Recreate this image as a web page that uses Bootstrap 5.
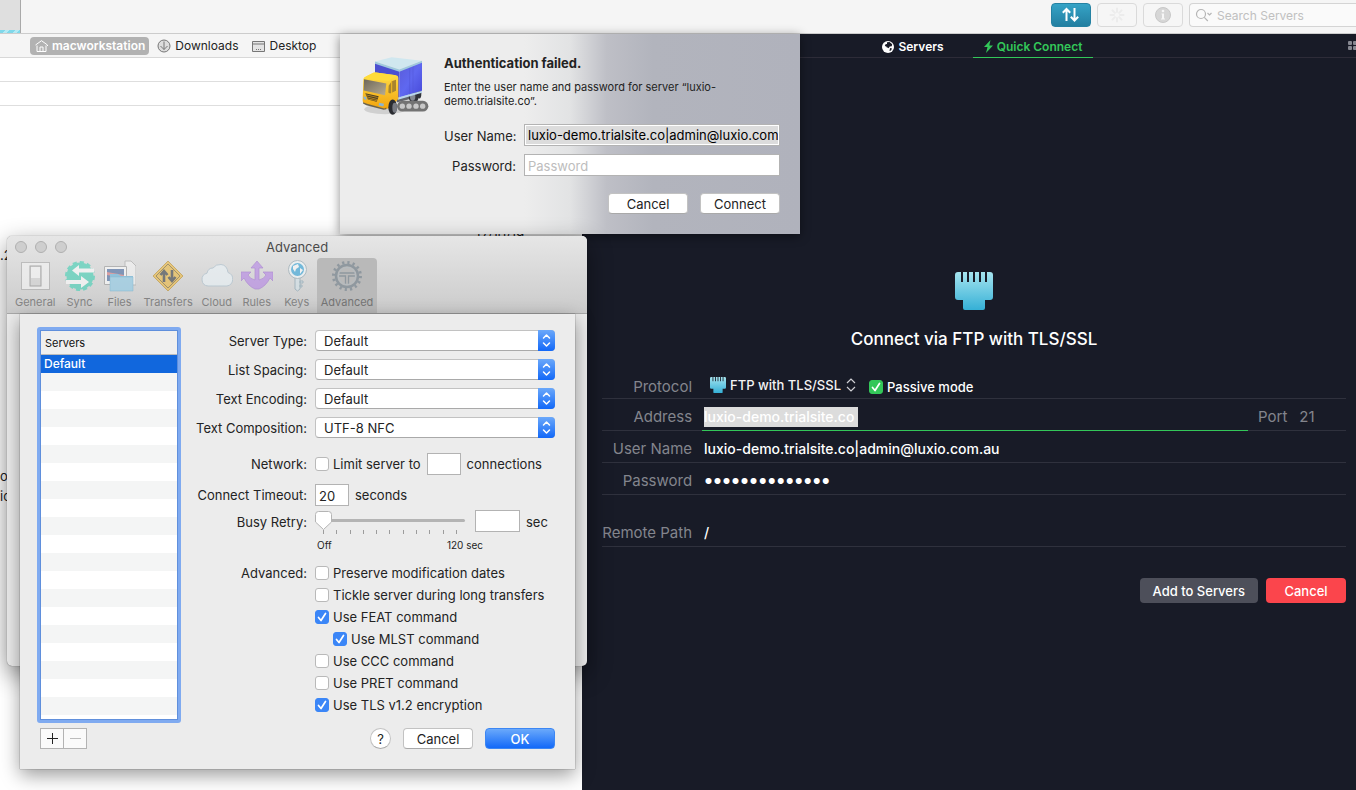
<!DOCTYPE html>
<html lang="en">
<head>
<meta charset="utf-8">
<meta name="viewport" content="width=device-width, initial-scale=1">
<title>Quick Connect</title>
<link href="https://cdn.jsdelivr.net/npm/bootstrap@5.3.0/dist/css/bootstrap.min.css" rel="stylesheet">
<style>
  body { font-family: Inter, "Liberation Sans", sans-serif; font-size: 13px; line-height: 16px; color: #232323; background: #fff; }
  svg { display: block; flex: none; }
  button { font: inherit; }
  input, select { font: inherit; color: inherit; min-width: 0; }
  input:focus, select:focus { outline: 0; }

  /* main toolbar */
  .topbar { height: 34px; background: #f5f5f5; border-bottom: 1px solid #ccc; }
  .tab-stub { width: 21px; background: #dfdfdf; border-right: 1px solid #a9a9a9; }
  .tab-stub::after { content: ""; display: block; height: 3px; margin-top: 30px; background: repeating-linear-gradient(135deg, #7fd8ea 0 4px, #b4eaf4 4px 7px); }
  .tool { width: 40px; height: 24px; border: 1px solid #dadada; border-radius: 4px; background: #f6f6f6; padding: 0; }
  .tool.on { background: linear-gradient(#35a3c6, #237fa1); border-color: #2582a3; }
  .finder { width: 167px; height: 24px; border: 1px solid #d4d4d4; border-right: 0; border-radius: 4px 0 0 4px; background: #fafafa; }
  .finder input { border: 0; background: none; padding: 2px 0 0; width: 120px; font-size: 12px; }
  .finder input::placeholder { color: #c0c0c0; opacity: 1; }

  /* local files */
  .local { width: calc(43% - 1px); background: #fff; overflow: hidden; }
  .places { height: 24px; padding: 1px 0 0 30px; background: #f5f5f5; border-bottom: 1px solid #d8d8d8; font-size: 12px; }
  .places a { color: #232323; text-decoration: none; height: 18px; border-radius: 4px; gap: 4px; }
  .places a.here { background: #b2b2b2; color: #fff; font-weight: 600; padding: 0 4px 0 5px; }
  .strip { height: 24px; border-bottom: 1px solid #dedede; }

  /* remote side */
  .remote { background: #181b27; color: #fff; overflow: hidden; }
  .tabs { height: 24px; padding-left: 8px; border-bottom: 1px solid #2d2c38; position: relative; font-size: 12px; }
  .tabs a { width: 120px; color: #fff; font-weight: 600; text-decoration: none; height: 24px; padding-top: 2px; gap: 4px; }
  .tabs a.on { color: #33c759; border-bottom: 1px solid #33c759; }
  .tabs .tiles { position: absolute; right: -1px; top: 7px; }
  .connect { padding: 214px 10px 0 20px; }
  .connect h1 { font-size: 17px; line-height: 24px; font-weight: 500; margin: 17px 0 20px; }
  .line { height: 32px; border-bottom: 1px solid #2f313d; font-size: 15px; line-height: 20px; }
  .line > label, .line .port { color: #83858d; }
  .line > label { width: 90px; text-align: right; padding-top: 4px; margin-right: 10px; flex: none; }
  .line .port { height: 32px; padding: 4px 0 0 10px; width: 98px; }
  .line .cell { height: 32px; padding: 4px 0 0 2px; font-size: 14px; }
  .line .cell.active { border-bottom: 1px solid #33c759; }
  .line input[type=text], .line input[type=password] { border: 0; background: none; color: #fff; padding: 0; font-weight: 500; height: 20px; width: 100%; }
  .line input[type=password] { font-size: 19px; font-weight: 700; }
  .line input[type=text].picked { background: #dcdcdc; width: 154px; }
  .line input[type=text].num { color: #83858d; width: 32px; font-weight: 400; }
  .line.proto { font-size: 13px; height: 28px; }
  .line.proto > label { font-size: 15px; }
  .line select { appearance: none; border: 0; background: none; color: #f4f4f4; padding: 0; width: 112px; font-weight: 500; }
  .line select option { color: #222; }
  .flat { border: 0; border-radius: 4px; height: 25px; color: #fff; font-weight: 500; padding: 0 13px; }

  /* tick boxes */
  .tick.form-check-input { width: 14px; height: 14px; margin: 0; border: 1px solid #b9b9b9; border-radius: 3px; background-color: #fff; flex: none; float: none; box-shadow: none; }
  .tick.form-check-input:checked { background-color: #3b86f7; border-color: #3b86f7; background-size: 14px; background-image: url("data:image/svg+xml,%3Csvg xmlns='http://www.w3.org/2000/svg' viewBox='0 0 14 14'%3E%3Cpath d='M3.500 7.500l2.500 3 4.500-7' fill='none' stroke='%23fff' stroke-width='1.700' stroke-linecap='round' stroke-linejoin='round'/%3E%3C/svg%3E"); }
  .tick.green.form-check-input:checked { background-color: #33c759; border-color: #33c759; }

  .push { height: 21px; border: 1px solid #c2c2c2; border-bottom-color: #a9a9a9; border-radius: 4px; background: #fff; line-height: 18px; padding: 0; color: #232323; }
  .push.main { background: linear-gradient(#6aa9fb, #1369f8); border-color: #3c86f3; color: #fff; font-weight: 500; }

  /* password sheet */
  .auth { position: absolute; left: 340px; top: 34px; width: 460px; padding: 21px 20px 20px; z-index: 3;
    background: linear-gradient(to right, #ededed 40%, #e2e3e4 50%, #bebfc6 58%, #b2b4bd 68%, #b0b2bc);
    box-shadow: 0 2px 10px rgba(0,0,0,.45); }
  .auth h2 { font-size: 13px; line-height: 16px; font-weight: 700; margin: 0 0 9px; }
  .auth p { font-size: 11px; line-height: 14px; margin: 0 0 16px; width: 300px; }
  .auth label { width: 72px; text-align: right; white-space: nowrap; padding-top: 2px; }
  .auth .push { width: 80px; }
  .box { height: 22px; border: 1px solid #b3b3b3; background: #fff; padding: 1px 3px 0; border-radius: 0; }
  .box.picked { padding: 1px 1px; background: linear-gradient(#dcdcdc, #dcdcdc) content-box, #fff; text-indent: 2px; color: #000; }
  .box::placeholder { color: #bdbdbd; opacity: 1; }

  /* preferences */
  .prefs { position: absolute; left: 7px; top: 236px; width: 580px; height: 430px; border-radius: 5px; background: #ececec; z-index: 4; box-shadow: 0 0 1px rgba(0,0,0,.6), 0 8px 24px rgba(0,0,0,.45); }
  .prefs header { height: 78px; border-radius: 5px 5px 0 0; background: linear-gradient(#e6e6e6, #cbcbcb); border-bottom: 1px solid #a8a8a8; }
  .caption { height: 22px; color: #4a4a4a; position: relative; }
  .lights { position: absolute; left: 8px; top: 5px; }
  .lights i { width: 12px; height: 12px; border-radius: 50%; background: #cecece; border: 1px solid #b0b0b0; }
  .panes { padding-left: 4px; }
  .panes button { border: 0; background: none; min-width: 40px; height: 55px; padding: 0 4px 3px; font-size: 11px; line-height: 14px; color: #858585; border-radius: 4px 4px 0 0; }
  .panes button.on { background: #b9b9b9; color: #757575; }
  .panes svg { opacity: .6; margin: 0 auto 3px; }
  .sheet { position: absolute; left: 13px; top: 78px; width: 555px; padding: 13px 20px 20px 17px; background: #ececec; box-shadow: 0 0 1px rgba(0,0,0,.6), 0 6px 18px rgba(0,0,0,.4); }
  .servers { width: 144px; height: 396px; border: 3px solid #7faaf0; border-radius: 3px; background: #fff; }
  .servers .inner { border: 1px solid #5f8fdc; height: 390px; background: repeating-linear-gradient(#fff 0 18px, #f4f5f5 18px 36px) 0 24px; }
  .servers table { width: 100%; border-collapse: separate; border-spacing: 0; }
  .servers th { font-size: 11px; font-weight: 400; height: 24px; line-height: 14px; padding: 0 4px; background: #efefef; border-bottom: 1px solid #bbb; color: #111; }
  .servers td { height: 18px; padding: 0 3px; background: #1167dd; color: #fff; line-height: 18px; font-weight: 500; font-size: 12px; }
  .pm { width: 24px; height: 21px; border: 1px solid #b3b3b3; background: #fafafa; padding: 0; }
  .pm + .pm { margin-left: -1px; }
  .cols > .lab { width: 126px; text-align: right; margin-right: 8px; flex: none; white-space: nowrap; }
  .pop { position: relative; width: 240px; height: 21px; }
  .pop select { appearance: none; width: 100%; height: 21px; border: 1px solid #c2c2c2; border-bottom-color: #a9a9a9; border-radius: 4px; background: #fff; padding: 0 8px; }
  .pop svg { position: absolute; right: 0; top: 0; pointer-events: none; }
  .slide { width: 150px; height: 20px; appearance: none; background: none; margin: 0; display: block; }
  .slide::-webkit-slider-runnable-track { height: 3px; background: #b4b4b4; border-radius: 2px; }
  .slide::-webkit-slider-thumb { appearance: none; width: 17px; height: 19px; margin-top: -8px; border: 0; background: url("data:image/svg+xml,%3Csvg xmlns='http://www.w3.org/2000/svg' viewBox='0 0 17 19'%3E%3Cpath d='M3.5.5h10a3 3 0 0 1 3 3v7.500l-8 7.500-8-7.500V3.500a3 3 0 0 1 3-3z' fill='%23fff' stroke='%23b4b4b4'/%3E%3C/svg%3E"); }
  .marks { padding: 0 8px; height: 4px; }
  .marks i { width: 1px; height: 4px; background: #9c9c9c; }
  .tiny { font-size: 10px; line-height: 14px; }
  .checks label { height: 22px; gap: 4px; }
  .help { width: 21px; height: 21px; border-radius: 50%; }
  .scraps { color: #222; line-height: 20px; }
</style>
</head>
<body class="vh-100 d-flex flex-column overflow-hidden position-relative">

<svg width="0" height="0" class="position-absolute" aria-hidden="true">
  <defs>
    <linearGradient id="gp" x1="0" y1="0" x2="0" y2="1"><stop offset="0" stop-color="#a5e4ef"/><stop offset="1" stop-color="#35b0d6"/></linearGradient>
    <linearGradient id="gb" x1="0" y1="0" x2="0" y2="1"><stop offset="0" stop-color="#6ba8fa"/><stop offset="1" stop-color="#1268f8"/></linearGradient>
    <symbol id="plug" viewBox="0 0 38 38"><path fill="url(#gp)" d="M3 0h3v10h2V0h4v10h2V0h4v10h2V0h4v10h2V0h4v10h2V0h3q3 0 3 3v22q0 3-3 3h-5v8q0 2-2 2H10q-2 0-2-2v-8H3q-3 0-3-3V3q0-3 3-3z"/></symbol>
    <symbol id="updown" viewBox="0 0 17 21"><path d="M0 0h13a4 4 0 0 1 4 4v13a4 4 0 0 1-4 4H0z" fill="url(#gb)"/><path d="M5.500 8l3-3 3 3M5.500 13l3 3 3-3" fill="none" stroke="#fff" stroke-width="1.500" stroke-linecap="round" stroke-linejoin="round"/></symbol>
  </defs>
</svg>

<div class="topbar d-flex">
  <div class="tab-stub"></div>
  <div class="d-flex ms-auto" style="gap:6px;padding-top:3px">
    <button class="tool on d-flex align-items-center justify-content-center" aria-label="Transfers"><svg width="18" height="16" viewBox="0 0 18 16" fill="none" stroke="#fff" stroke-width="2"><path d="M4.500 14V2M.8 5.800L4.500 2l3.700 3.800M12.500 1v12.500M8.800 9.700l3.700 3.800 3.700-3.800"/></svg></button>
    <button class="tool d-flex align-items-center justify-content-center" aria-label="Activity"><svg width="16" height="16" viewBox="0 0 16 16" stroke="#ececec" stroke-width="2" stroke-linecap="round"><path d="M8 1.500V5M8 11v3.500M1.500 8H5M11 8h3.500M3.400 3.400l2.500 2.500M10.100 10.100l2.500 2.500M3.400 12.600l2.500-2.500M10.100 5.900l2.500-2.500"/></svg></button>
    <button class="tool d-flex align-items-center justify-content-center" aria-label="Info"><svg width="16" height="16" viewBox="0 0 16 16"><circle cx="8" cy="8" r="7.500" fill="#d6d6d6" stroke="#c8c8c8"/><path d="M6.500 6.500H9v6H7v-5h-.5zM6 11.500h4v1H6z" fill="#f6f6f6"/><circle cx="8" cy="4" r="1.300" fill="#f6f6f6"/></svg></button>
    <div class="finder d-flex align-items-center ps-1">
      <svg width="23" height="14" viewBox="0 0 23 14" fill="none" stroke="#b5b5b5" stroke-width="1.200"><circle cx="7" cy="6" r="4.500"/><path d="M10.300 9.300l3.500 3.700M13.500 5l2 2 2-2"/></svg>
      <input type="search" placeholder="Search Servers" aria-label="Search Servers">
    </div>
  </div>
</div>

<div class="d-flex flex-fill">
  <section class="local">
    <nav class="places d-flex align-items-center">
      <a href="#" class="here d-flex align-items-center"><svg width="13" height="12" viewBox="0 0 13 12" fill="none" stroke="#fff"><path d="M.5 5L6.500.7 12.500 5v1M2 5.500v6h9v-6M5 11V7h3v4"/></svg>macworkstation</a>
      <a href="#" class="d-flex align-items-center ms-2"><svg width="14" height="14" viewBox="0 0 14 14" fill="none" stroke="#777"><circle cx="7" cy="7" r="6" fill="#ddd"/><path d="M7 2.500v8M3.500 7L7 10.500 10.500 7"/></svg>Downloads</a>
      <a href="#" class="d-flex align-items-center" style="margin-left:14px"><svg width="13" height="11" viewBox="0 0 13 11" fill="#e4e4e4" stroke="#777"><path d="M.5.500h12v10H.5zM.5 3h12"/><path d="M4 8.500h1M6 8.500h1M8 8.500h1"/></svg>Desktop</a>
    </nav>
    <div class="strip"></div>
    <div class="strip"></div>
    <div class="scraps position-relative">
      <div class="text-end" style="padding:119px 58px 0 0">17/10/19</div>
      <div>.2</div>
      <div style="padding-top:201px">o</div>
      <div>io</div>
    </div>
  </section>

  <main class="remote flex-fill">
    <nav class="tabs d-flex justify-content-center">
      <a href="#" class="d-flex align-items-center justify-content-center"><svg width="12" height="12" viewBox="0 0 12 12"><circle cx="6" cy="6" r="6" fill="#fff"/><path d="M5 1.200L7.500 1l2.700 2.200-.5 2-2 .3-1 1.800-1-.8-.7.300-.7-1.300-1.500-.5.700-1.800L5 3zM8 7l2 .5-1 2-1.500.5z" fill="#181b27"/></svg>Servers</a>
      <a href="#" class="on d-flex align-items-center justify-content-center"><svg width="9" height="13" viewBox="0 0 9 13"><path d="M6.500 0L0 7h3.500L2 13l7-7.500H5.300z" fill="#33c759"/></svg>Quick Connect</a>
      <svg class="tiles" width="9" height="9" viewBox="0 0 9 9" fill="#858790"><rect width="4" height="4" rx="1"/><rect x="5" width="4" height="4" rx="1"/><rect y="5" width="4" height="4" rx="1"/><rect x="5" y="5" width="4" height="4" rx="1"/></svg>
    </nav>

    <form class="connect" onsubmit="return false">
      <svg class="mx-auto" width="38" height="38"><use href="#plug"/></svg>
      <h1 class="text-center">Connect via FTP with TLS/SSL</h1>
      <div class="line proto d-flex align-items-center">
        <label for="proto">Protocol</label>
        <svg class="ms-2" width="16" height="16"><use href="#plug"/></svg>
        <select id="proto" class="ms-1"><option>FTP with TLS/SSL</option></select>
        <svg class="ms-1" width="10" height="14" viewBox="0 0 10 14" fill="none" stroke="#d0d0d4" stroke-width="1.200"><path d="M1 5l4-4 4 4M1 9l4 4 4-4"/></svg>
        <span class="d-flex align-items-center gap-1 fw-medium" style="margin-left:13px;padding-top:4px"><input class="tick green form-check-input" type="checkbox" id="passive" checked><label for="passive">Passive mode</label></span>
      </div>
      <div class="line d-flex">
        <label class="align-self-center" for="addr">Address</label>
        <div class="cell active flex-fill d-flex align-items-center"><input id="addr" class="picked" type="text" value="luxio-demo.trialsite.co"></div>
        <div class="port d-flex align-items-center"><label for="port" class="me-2 pe-1">Port</label><input class="num" id="port" type="text" value="21"></div>
      </div>
      <div class="line d-flex">
        <label class="align-self-center" for="user">User Name</label>
        <div class="cell flex-fill d-flex align-items-center"><input id="user" type="text" value="luxio-demo.trialsite.co|admin@luxio.com.au"></div>
      </div>
      <div class="line d-flex">
        <label class="align-self-center" for="pass">Password</label>
        <div class="cell flex-fill d-flex align-items-center"><input id="pass" type="password" value="abcdefghijklmn"></div>
      </div>
      <div class="line d-flex" style="margin-top:20px">
        <label class="align-self-center" for="path">Remote Path</label>
        <div class="cell flex-fill d-flex align-items-center"><input id="path" type="text" value="/"></div>
      </div>
      <div class="d-flex justify-content-end gap-2" style="margin-top:31px">
        <button class="flat" style="background:#4d4f5a">Add to Servers</button>
        <button class="flat" style="background:#fb454c;width:80px">Cancel</button>
      </div>
    </form>
  </main>
</div>

<form class="auth" onsubmit="return false">
  <div class="d-flex">
    <svg width="70" height="62" viewBox="60 76 210 185" style="margin-right:14px">
      <defs>
        <linearGradient id="tb" x1="0" y1="0" x2="1" y2="1"><stop offset="0" stop-color="#5a5bd8"/><stop offset=".5" stop-color="#5f68f0"/><stop offset="1" stop-color="#4648d8"/></linearGradient>
        <linearGradient id="ty" x1="0" y1="0" x2="0" y2="1"><stop offset="0" stop-color="#ffdf4a"/><stop offset="1" stop-color="#f2a30c"/></linearGradient>
        <linearGradient id="tw" x1="0" y1="0" x2="1" y2="1"><stop offset="0" stop-color="#6d6659"/><stop offset="1" stop-color="#b8ad92"/></linearGradient>
      </defs>
      <ellipse cx="135" cy="238" rx="62" ry="15" fill="#000" opacity=".12"/>
      <path d="M170 205l70-20v15l-70 18z" fill="#62656c"/>
      <ellipse cx="221" cy="200" rx="15" ry="20" fill="#303238"/><ellipse cx="218" cy="201" rx="8" ry="12" fill="#858992"/>
      <ellipse cx="238" cy="190" rx="6" ry="16" fill="#303238"/>
      <path d="M105 97l73 24v84l-73-40z" fill="#4b4fd0"/>
      <path d="M178 121l68-26v88l-68 20z" fill="url(#tb)"/>
      <path d="M209 110v84M219 106v84" stroke="#5055d4" stroke-width="1.500"/>
      <path d="M105 95l50-13 91 11-68 26z" fill="#d0e7ef"/><path d="M105 95l73 24v7l-73-24zM178 119l68-26v6l-68 27z" fill="#9fc8dc"/>
      <path d="M174 203l72-20v6l-72 21z" fill="#b9d5ec"/>
      <path d="M70 148q2-6 8-8l22-11q3-2 8-1l60 8q7 1 7 8v63l-12 14-15 14-14 3-56-15q-10-3-10-12z" fill="url(#ty)"/>
      <path d="M70 148q2-6 8-8l22-11q3-2 8-1l60 8-22 17z" fill="#ffdc3b"/>
      <path d="M72 148l67 13-4 35-64-14z" fill="url(#tw)"/>
      <path d="M146 168l9-14 13-4v33l-18 8-5-3z" fill="#a8842e"/><path d="M155 153v38" stroke="#f4bb20" stroke-width="3"/>
      <path d="M76 190l40 9-6 17-26-7z" fill="#473c26"/><path d="M78 195l35 8M80 201l32 8M83 207l28 6" stroke="#e8a81c" stroke-width="2"/>
      <path d="M71 199l8 3v9l-8-4zM117 219l15 3-2 8-14-3z" fill="#8bb4cf"/>
      <path d="M69 217l12 5 52 14 6-3v5l-8 2-52-14-10-5z" fill="#6b624a"/>
      <ellipse cx="158" cy="232" rx="13" ry="23" fill="#292b30"/><ellipse cx="164" cy="234" rx="7" ry="15" fill="#777a82"/>
      <rect x="171" y="213" width="94" height="32" rx="16" fill="#737373"/>
      <g fill="#c8c8c8"><circle cx="187" cy="229" r="8"/><circle cx="207" cy="229" r="8"/><circle cx="228" cy="229" r="8"/><circle cx="248" cy="229" r="8"/></g>
    </svg>
    <div>
      <h2>Authentication failed.</h2>
      <p>Enter the user name and password for server “luxio-demo.trialsite.co”.</p>
    </div>
  </div>
  <div class="d-flex align-items-center gap-2" style="padding-left:84px">
    <label for="auser">User Name:</label><input id="auser" class="box picked flex-fill" type="text" value="luxio-demo.trialsite.co|admin@luxio.com.au">
  </div>
  <div class="d-flex align-items-center gap-2 mt-2" style="padding-left:84px">
    <label for="apass">Password:</label><input id="apass" class="box flex-fill" type="password" placeholder="Password">
  </div>
  <div class="d-flex justify-content-end" style="gap:12px;margin-top:17px">
    <button class="push">Cancel</button><button class="push">Connect</button>
  </div>
</form>

<div class="prefs">
  <header>
    <div class="caption d-flex align-items-center justify-content-center">
      <div class="lights d-flex gap-2"><i></i><i></i><i></i></div>
      Advanced
    </div>
    <div class="panes d-flex">
      <button><svg width="32" height="33" viewBox="0 0 32 33"><rect x="2.500" y="3.500" width="28" height="27" fill="#f6f6f6" stroke="#a8a8a8"/><rect x="11" y="7" width="11" height="20" fill="#d4d4d4" stroke="#888"/><path d="M12 8h9v11h-9z" fill="#fafafa"/></svg>General</button>
      <button><svg width="32" height="33" viewBox="0 0 32 33"><circle cx="16" cy="17" r="13.500" fill="#3fd0b4" stroke="#3fd0b4" stroke-width="3" stroke-dasharray="4 3"/><path d="M8 11.500l7-5.500v3.500h15v4H15V17zM25 23l-8 6v-4H2v-4h15v-4z" fill="#fff"/></svg>Sync</button>
      <button><svg width="32" height="33" viewBox="0 0 32 33"><path d="M21 2h6l5 5v19H21z" fill="#f5f5f5" stroke="#aaa"/><path d="M.5 7.500h22v18H.5z" fill="#fff" stroke="#999"/><path d="M3 10h17v12H3z" fill="#4568a0"/><path d="M3 13l17 3v3L3 16z" fill="#d9797c"/><path d="M6 15h8l3 2h12v15H6z" fill="#63b4dd"/><path d="M6 18h23v14H6z" fill="#8ccbe8" stroke="#52a4cc" stroke-width=".5"/></svg>Files</button>
      <button><svg width="32" height="33" viewBox="0 0 32 33"><path d="M16 2l15 15-15 15L1 17z" fill="#edb83b" stroke="#bd8d22" stroke-linejoin="round"/><path d="M16 5l12 12-12 12L4 17z" fill="none" stroke="#5c4b20" stroke-width=".8"/><path d="M12 23V14M8.500 16L12 12l3.500 4M20 11v9M16.500 18L20 22l3.500-4" fill="none" stroke="#34383c" stroke-width="2.600"/></svg>Transfers</button>
      <button><svg width="32" height="33" viewBox="0 0 32 33"><path d="M7 27a6.500 6.500 0 0 1-1-12.800Q7 9 12 9q3-4 8-3.500 6 .5 7 8a7 7 0 0 1-1 13.500z" fill="#ecf5fa" stroke="#a9bfcd"/></svg>Cloud</button>
      <button><svg width="32" height="33" viewBox="0 0 32 33"><path d="M16 2l6 7h-4v12q5-1 7-5l-3-3h10v9l-3-3q-4 8-11 11h-4Q7 27 3 19l-3 3v-9h10l-3 3q2 4 7 5V9h-4z" fill="#b483e6" stroke="#9560cd" stroke-width=".7"/></svg>Rules</button>
      <button><svg width="32" height="33" viewBox="0 0 32 33"><path d="M14 18h5v12l-2.500 2L14 30zM19 22h3v2h-3zM19 26h2v2h-2z" fill="#d3e3ea" stroke="#83a0af"/><circle cx="16.500" cy="10.500" r="9" fill="#f4fafd" stroke="#91a6b0"/><circle cx="16.500" cy="10.500" r="6.500" fill="#2fa3da"/><path d="M12 7l5-2 1 3-3 2-1 3-2-3zM19 9l3 2-3 4z" fill="#fff"/></svg>Keys</button>
      <button class="on"><svg width="32" height="33" viewBox="0 0 32 33" fill="none" stroke="#74838f"><circle cx="16" cy="17" r="13.500" stroke-width="3" stroke-dasharray="2.200 3.100"/><circle cx="16" cy="17" r="11" stroke-width="2.500"/><path d="M8 14h16M8 17h6.500v8M24 17h-6.500v8" stroke-width="1.300"/><circle cx="16" cy="17" r="8.500" stroke="#b4bfc7"/></svg>Advanced</button>
    </div>
  </header>

  <form class="sheet" onsubmit="return false">
    <div class="d-flex">
      <div class="servers flex-shrink-0"><div class="inner">
        <table><thead><tr><th>Servers</th></tr></thead><tbody><tr><td>Default</td></tr></tbody></table>
      </div></div>

      <div class="flex-fill" style="padding-top:3px">
        <div class="d-flex flex-column gap-2">
          <div class="cols d-flex align-items-center"><label class="lab" for="s1">Server Type:</label><div class="pop"><select id="s1"><option>Default</option></select><svg width="17" height="21"><use href="#updown"/></svg></div></div>
          <div class="cols d-flex align-items-center"><label class="lab" for="s2">List Spacing:</label><div class="pop"><select id="s2"><option>Default</option></select><svg width="17" height="21"><use href="#updown"/></svg></div></div>
          <div class="cols d-flex align-items-center"><label class="lab" for="s3">Text Encoding:</label><div class="pop"><select id="s3"><option>Default</option></select><svg width="17" height="21"><use href="#updown"/></svg></div></div>
          <div class="cols d-flex align-items-center"><label class="lab" for="s4">Text Composition:</label><div class="pop"><select id="s4"><option>UTF-8 NFC</option></select><svg width="17" height="21"><use href="#updown"/></svg></div></div>
        </div>
        <div class="cols d-flex align-items-center" style="margin-top:15px"><span class="lab">Network:</span><input class="tick form-check-input" type="checkbox" id="lim"><label for="lim" class="ms-1">Limit server to</label><input class="box" style="width:34px;margin:0 6px" type="text" aria-label="Connections"><span>connections</span></div>
        <div class="cols d-flex align-items-center" style="margin-top:9px"><label class="lab" for="to">Connect Timeout:</label><input class="box" style="width:34px;margin-right:6px" type="text" id="to" value="20"><span>seconds</span></div>
        <div class="cols d-flex mt-1">
          <label class="lab pt-1" for="busy">Busy Retry:</label>
          <div style="width:150px">
            <input id="busy" class="slide" type="range" min="0" max="120" value="0">
            <div class="marks d-flex justify-content-between"><i></i><i></i><i></i><i></i><i></i><i></i><i></i><i></i><i></i><i></i><i></i></div>
          </div>
          <input class="box" style="width:45px;margin:0 6px 0 10px" type="text" aria-label="Seconds"><span class="pt-1">sec</span>
        </div>
        <div class="tiny d-flex justify-content-between" style="margin:4px 72px 0 136px"><span>Off</span><span>120 sec</span></div>
        <div class="cols d-flex" style="margin-top:10px">
          <span class="lab" style="padding-top:3px">Advanced:</span>
          <div class="checks">
            <label class="d-flex align-items-center"><input class="tick form-check-input" type="checkbox">Preserve modification dates</label>
            <label class="d-flex align-items-center"><input class="tick form-check-input" type="checkbox">Tickle server during long transfers</label>
            <label class="d-flex align-items-center"><input class="tick form-check-input" type="checkbox" checked>Use FEAT command</label>
            <label class="d-flex align-items-center" style="padding-left:18px"><input class="tick form-check-input" type="checkbox" checked>Use MLST command</label>
            <label class="d-flex align-items-center"><input class="tick form-check-input" type="checkbox">Use CCC command</label>
            <label class="d-flex align-items-center"><input class="tick form-check-input" type="checkbox">Use PRET command</label>
            <label class="d-flex align-items-center"><input class="tick form-check-input" type="checkbox" checked>Use TLS v1.2 encryption</label>
          </div>
        </div>
      </div>
    </div>
    <div class="d-flex" style="margin-top:5px;padding-left:3px">
      <button class="pm" aria-label="Add"><svg class="mx-auto" width="11" height="11" viewBox="0 0 11 11" stroke="#222"><path d="M5.500 0v11M0 5.500h11"/></svg></button>
      <button class="pm" aria-label="Remove"><svg class="mx-auto" width="11" height="11" viewBox="0 0 11 11" stroke="#bbb"><path d="M0 5.500h11"/></svg></button>
      <div class="d-flex ms-auto" style="gap:12px">
        <button class="push help">?</button>
        <button class="push" style="width:70px">Cancel</button>
        <button class="push main" style="width:70px">OK</button>
      </div>
    </div>
  </form>
</div>
<script src="https://cdn.jsdelivr.net/npm/bootstrap@5.3.0/dist/js/bootstrap.bundle.min.js"></script>
</body>
</html>
